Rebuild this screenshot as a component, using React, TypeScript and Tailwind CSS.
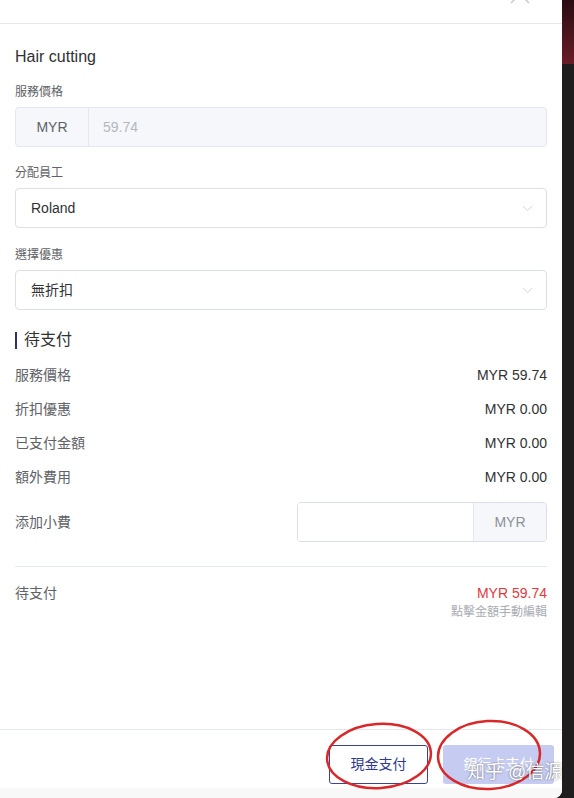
import React from "react";
import { ChevronDown } from "lucide-react";

export default function App() {
  const summary = [
    { label: "服務價格", value: "MYR 59.74" },
    { label: "折扣優惠", value: "MYR 0.00" },
    { label: "已支付金額", value: "MYR 0.00" },
    { label: "額外費用", value: "MYR 0.00" },
  ];

  return (
    <div className="relative flex h-[798px] w-[574px] overflow-hidden bg-[#1d1b1c] font-['Liberation_Sans','Noto_Sans_CJK_TC',sans-serif]">
      {/* Drawer panel */}
      <div className="flex h-full w-[562px] flex-col overflow-hidden rounded-br-[8px] bg-white">
        {/* Header (cut off at top) */}
        <div className="flex h-[24px] shrink-0 justify-end overflow-hidden border-b border-[#e4e7ed] pr-[31px]">
          <svg width="22" height="22" viewBox="0 0 22 22" className="-mt-[17px] text-[#c4c6cb]">
            <path d="M2 2 L20 20 M20 2 L2 20" stroke="currentColor" strokeWidth="1.4" fill="none" />
          </svg>
        </div>

        {/* Body */}
        <div className="flex flex-1 flex-col px-[15px]">
          <h1 className="mt-[21px] text-[16px] leading-[24px] text-[#303133]">Hair cutting</h1>

          {/* 服務價格 */}
          <div className="mt-[14px]">
            <div className="mb-[6px] text-[12px] leading-[18px] text-[#606266]">服務價格</div>
            <div className="flex h-[40px] overflow-hidden rounded-[4px] border border-[#e4e7ed] bg-[#f5f7fa]">
              <div className="flex w-[73px] items-center justify-center border-r border-[#e4e7ed] text-[14px] text-[#606266]">
                MYR
              </div>
              <div className="flex items-center pl-[14px] text-[14px] text-[#b4b7bd]">59.74</div>
            </div>
          </div>

          {/* 分配員工 */}
          <div className="mt-[17px]">
            <div className="mb-[6px] text-[12px] leading-[18px] text-[#606266]">分配員工</div>
            <div className="flex h-[40px] items-center justify-between rounded-[4px] border border-[#dcdfe6] pl-[15px] pr-[10px]">
              <span className="text-[14px] text-[#303133]">Roland</span>
              <ChevronDown className="h-[17px] w-[17px] text-[#c9ccd2]" strokeWidth={1.1} />
            </div>
          </div>

          {/* 選擇優惠 */}
          <div className="mt-[18px]">
            <div className="mb-[6px] text-[12px] leading-[18px] text-[#606266]">選擇優惠</div>
            <div className="flex h-[40px] items-center justify-between rounded-[4px] border border-[#dcdfe6] pl-[15px] pr-[10px]">
              <span className="text-[14px] text-[#303133]">無折扣</span>
              <ChevronDown className="h-[17px] w-[17px] text-[#c9ccd2]" strokeWidth={1.1} />
            </div>
          </div>

          {/* 待支付 heading */}
          <div className="mt-[18px] flex items-center gap-[7px]">
            <div className="h-[17px] w-[2px] bg-[#2e3166]" />
            <h2 className="text-[16px] leading-[24px] text-[#303133]">待支付</h2>
          </div>

          <div className="mt-[6px]">
            {summary.map((row) => (
              <div key={row.label} className="flex h-[34px] items-center justify-between text-[14px]">
                <span className="text-[#606266]">{row.label}</span>
                <span className="text-[#303133]">{row.value}</span>
              </div>
            ))}
          </div>

          {/* 添加小費 */}
          <div className="mt-[8px] flex h-[40px] items-center justify-between">
            <span className="text-[14px] text-[#606266]">添加小費</span>
            <div className="flex h-full w-[250px] overflow-hidden rounded-[4px] border border-[#dcdfe6]">
              <div className="flex-1 bg-white" />
              <div className="flex w-[73px] items-center justify-center border-l border-[#e4e7ed] bg-[#f5f7fa] text-[14px] text-[#8d9098]">
                MYR
              </div>
            </div>
          </div>

          <div className="mt-[24px] border-t border-[#e4e7ed]" />

          <div className="mt-[16px] flex justify-between">
            <span className="text-[14px] leading-[20px] text-[#606266]">待支付</span>
            <div className="flex flex-col items-end">
              <span className="text-[14px] leading-[20px] text-[#e0393e]">MYR 59.74</span>
              <span className="text-[12px] leading-[18px] text-[#a8abb2]">點擊金額手動編輯</span>
            </div>
          </div>
        </div>

        {/* Footer */}
        <div className="flex h-[59px] shrink-0 items-start justify-end gap-[15px] border-t border-[#e4e7ed] pr-[8px] pt-[15px]">
          <button className="h-[39px] w-[99px] rounded-[3px] border border-[#3b4494] bg-white text-[14px] text-[#2f3a8f]">
            現金支付
          </button>
          <button className="h-[39px] w-[111px] rounded-[3px] bg-[#c6cbf1] text-[14px] text-white">
            銀行卡支付
          </button>
        </div>
        <div className="h-[10px] shrink-0 bg-[#f8f8f8]" />
      </div>

      {/* Right backdrop strip */}
      <div className="flex flex-1 flex-col">
        <div className="h-[64px] bg-gradient-to-b from-[#2a0c12] to-[#6a1d27]" />
        <div className="flex-1 bg-[#1f1d1e]" />
      </div>

      {/* Annotation circles */}
      <svg className="pointer-events-none absolute left-0 top-0" width="574" height="798">
        <ellipse cx="379" cy="756" rx="52" ry="32" transform="rotate(-4 379 756)" fill="none" stroke="#d8282a" strokeWidth="2.5" />
        <ellipse cx="489" cy="755" rx="51" ry="34" transform="rotate(-3 489 755)" fill="none" stroke="#d8282a" strokeWidth="2.5" />
      </svg>

      {/* Watermark */}
      <div className="pointer-events-none absolute left-[467px] top-[761px] text-[18px] leading-[22px] text-white [text-shadow:0_0_2px_rgba(0,0,0,0.55)]">
        知乎 @信源
      </div>
    </div>
  );
}
